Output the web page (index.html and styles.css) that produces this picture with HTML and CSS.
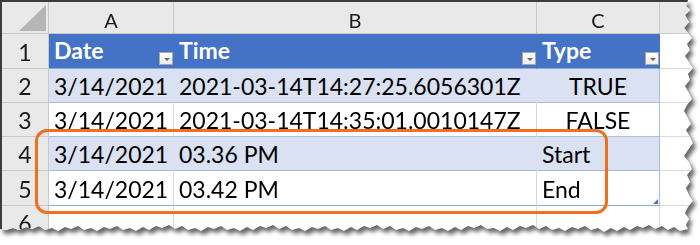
FILE: index.html
```html
<!DOCTYPE html>
<html lang="en">
<head>
<meta charset="utf-8">
<title>Sheet1</title>
<link rel="stylesheet" href="styles.css">
</head>
<body>
<div class="page">
  <div class="shadow">
    <div class="paper">
      <div class="sheet">
        <div class="corner"><span class="tri"></span></div>
        <div class="colhead">A</div>
        <div class="colhead">B</div>
        <div class="colhead">C</div>
        <div class="colhead blank"></div>

        <div class="rowhead">1</div>
        <div class="cell th"><span>Date</span><i class="filter"></i></div>
        <div class="cell th"><span>Time</span><i class="filter"></i></div>
        <div class="cell th last"><span>Type</span><i class="filter"></i></div>
        <div class="cell out"></div>

        <div class="rowhead">2</div>
        <div class="cell band">3/14/2021</div>
        <div class="cell band">2021-03-14T14:27:25.6056301Z</div>
        <div class="cell band last center">TRUE</div>
        <div class="cell out"></div>

        <div class="rowhead">3</div>
        <div class="cell plain">3/14/2021</div>
        <div class="cell plain">2021-03-14T14:35:01.0010147Z</div>
        <div class="cell plain last center">FALSE</div>
        <div class="cell out"></div>

        <div class="rowhead">4</div>
        <div class="cell band">3/14/2021</div>
        <div class="cell band">03.36 PM</div>
        <div class="cell band last">Start</div>
        <div class="cell out"></div>

        <div class="rowhead">5</div>
        <div class="cell plain bottom">3/14/2021</div>
        <div class="cell plain bottom">03.42 PM</div>
        <div class="cell plain bottom last">End<i class="handle"></i></div>
        <div class="cell out"></div>

        <div class="rowhead">6</div>
        <div class="cell out"></div>
        <div class="cell out"></div>
        <div class="cell out"></div>
        <div class="cell out"></div>
      </div>
    </div>
  </div>
  <div class="highlight"></div>
</div>
</body>
</html>
```
FILE: styles.css
```css
* { box-sizing: border-box; }

html, body {
  margin: 0;
  padding: 0;
  background: #ffffff;
}

.page {
  position: relative;
  width: 700px;
  height: 245px;
  overflow: hidden;
  background: #ffffff;
}

/* torn paper: shadow wrapper + clipped sheet */
.shadow {
  filter: drop-shadow(3px 4px 2px rgba(0, 0, 0, 0.6));
}

.paper {
  width: 700px;
  height: 240px;
  background: #ffffff;
  border-top: 2px solid #3c3c3c;
  border-left: 2px solid #3c3c3c;
  overflow: hidden;
  clip-path: polygon(
    0 0, 688px 0, 686px 6px, 690px 10px, 685px 15px, 689px 22px, 684px 28px,
    688px 33px, 692px 38px, 687px 44px, 690px 50px, 685px 56px, 689px 62px,
    693px 68px, 688px 74px, 690px 80px, 685px 86px, 689px 93px, 692px 99px,
    687px 105px, 684px 111px, 688px 118px, 691px 124px, 686px 130px,
    690px 137px, 693px 143px, 688px 150px, 684px 156px, 689px 162px,
    692px 169px, 687px 175px, 690px 182px, 686px 188px, 689px 195px,
    693px 201px, 688px 207px, 685px 213px, 689px 219px, 686px 225px,
    688px 229px,
    680px 231px, 674px 227px, 668px 230px, 662px 226px, 655px 229px,
    649px 225px, 643px 228px, 637px 226px, 630px 230px, 624px 227px,
    617px 231px, 611px 228px, 604px 232px, 598px 228px, 591px 230px,
    585px 226px, 578px 229px, 572px 227px, 565px 231px, 559px 228px,
    552px 230px, 546px 226px, 539px 229px, 533px 225px, 526px 228px,
    520px 226px, 513px 230px, 507px 227px, 500px 231px, 494px 228px,
    487px 229px, 481px 225px, 474px 228px, 468px 226px, 461px 230px,
    455px 227px, 448px 231px, 442px 228px, 435px 230px, 429px 226px,
    422px 229px, 416px 227px, 409px 231px, 403px 228px, 396px 230px,
    390px 226px, 383px 229px, 377px 225px, 370px 228px, 364px 226px,
    357px 230px, 351px 227px, 344px 231px, 338px 228px, 331px 230px,
    325px 226px, 318px 229px, 312px 227px, 305px 231px, 299px 228px,
    292px 230px, 286px 226px, 279px 229px, 273px 225px, 266px 228px,
    260px 226px, 253px 230px, 247px 227px, 240px 231px, 234px 228px,
    227px 230px, 221px 226px, 214px 229px, 208px 227px, 201px 231px,
    195px 228px, 188px 230px, 182px 226px, 175px 229px, 169px 225px,
    162px 228px, 156px 226px, 149px 230px, 143px 227px, 136px 231px,
    130px 228px, 123px 230px, 117px 226px, 110px 229px, 104px 227px,
    97px 231px, 91px 228px, 84px 230px, 78px 226px, 71px 229px,
    65px 227px, 58px 231px, 52px 228px, 45px 230px, 39px 226px,
    32px 229px, 26px 227px, 19px 230px, 13px 228px, 6px 230px, 0 229px
  );
}

/* worksheet grid */
.sheet {
  display: grid;
  grid-template-columns: 47px 125px 363px 123px 1fr;
  grid-template-rows: 32px 35px 34px 34px 34px 35px 34px;
  font-family: "Lato", "Open Sans", sans-serif;
  font-size: 23px;
  color: #000000;
}

.corner {
  background: #e9e9e9;
  border-right: 1px solid #c9c9c9;
  border-bottom: 1px solid #c9c9c9;
  display: flex;
  justify-content: flex-end;
  align-items: flex-end;
  padding: 0 2px 2px 0;
}

.tri {
  width: 27px;
  height: 26px;
  background: #b5b5b5;
  clip-path: polygon(100% 0, 100% 100%, 0 100%);
}

.colhead {
  background: #e9e9e9;
  border-right: 1px solid #c9c9c9;
  border-bottom: 1px solid #c9c9c9;
  display: flex;
  justify-content: center;
  align-items: flex-end;
  padding-bottom: 3px;
  font-size: 20px;
  line-height: 20px;
  color: #1a1a1a;
}

.colhead.blank { border-right: none; }

.rowhead {
  background: #e9e9e9;
  border-right: 1px solid #c9c9c9;
  border-bottom: 1px solid #c9c9c9;
  display: flex;
  justify-content: center;
  align-items: flex-end;
  padding-bottom: 4px;
  line-height: 23px;
  color: #1a1a1a;
}

.cell {
  display: flex;
  align-items: flex-end;
  justify-content: space-between;
  padding: 0 1px 4px 5px;
  line-height: 23px;
  white-space: nowrap;
  border-right: 1px solid #d9d9d9;
  border-bottom: 1px solid #d9d9d9;
  position: relative;
}

.cell.center { justify-content: center; padding-left: 0; padding-right: 0; }

.th {
  background: #4472c4;
  color: #ffffff;
  font-weight: 700;
  border-right-color: #4472c4;
  border-bottom-color: #8ea9db;
  padding-bottom: 6px;
  padding-right: 0;
}

.th span { line-height: 23px; }

.band {
  background: #d9e1f2;
  border-right-color: #d9e1f2;
  border-bottom-color: #a9bde3;
}

.plain { border-bottom-color: #a9bde3; }

.cell.last { border-right-color: #a9bde3; }
.th.last { border-right-color: #4472c4; }
.cell.bottom { border-bottom-color: #8ea9db; }

.out { border-right-color: #dadada; }

/* autofilter drop-down button */
.filter {
  display: block;
  flex: none;
  width: 14px;
  height: 13px;
  margin-bottom: -3px;
  background: linear-gradient(#fdfdfd, #ececec);
  border: 1px solid #a8a8a8;
  position: relative;
}

.filter::after {
  content: "";
  position: absolute;
  left: 4px;
  top: 5px;
  border-left: 3px solid transparent;
  border-right: 3px solid transparent;
  border-top: 3px solid #666666;
}

/* table resize handle */
.handle {
  position: absolute;
  right: 1px;
  bottom: 1px;
  width: 5px;
  height: 5px;
  background: #4472c4;
  clip-path: polygon(100% 0, 100% 100%, 0 100%);
}

/* orange callout around rows 4 and 5 */
.highlight {
  position: absolute;
  left: 35px;
  top: 129px;
  width: 573px;
  height: 85px;
  border: 3px solid #f07020;
  border-radius: 12px;
}
```
